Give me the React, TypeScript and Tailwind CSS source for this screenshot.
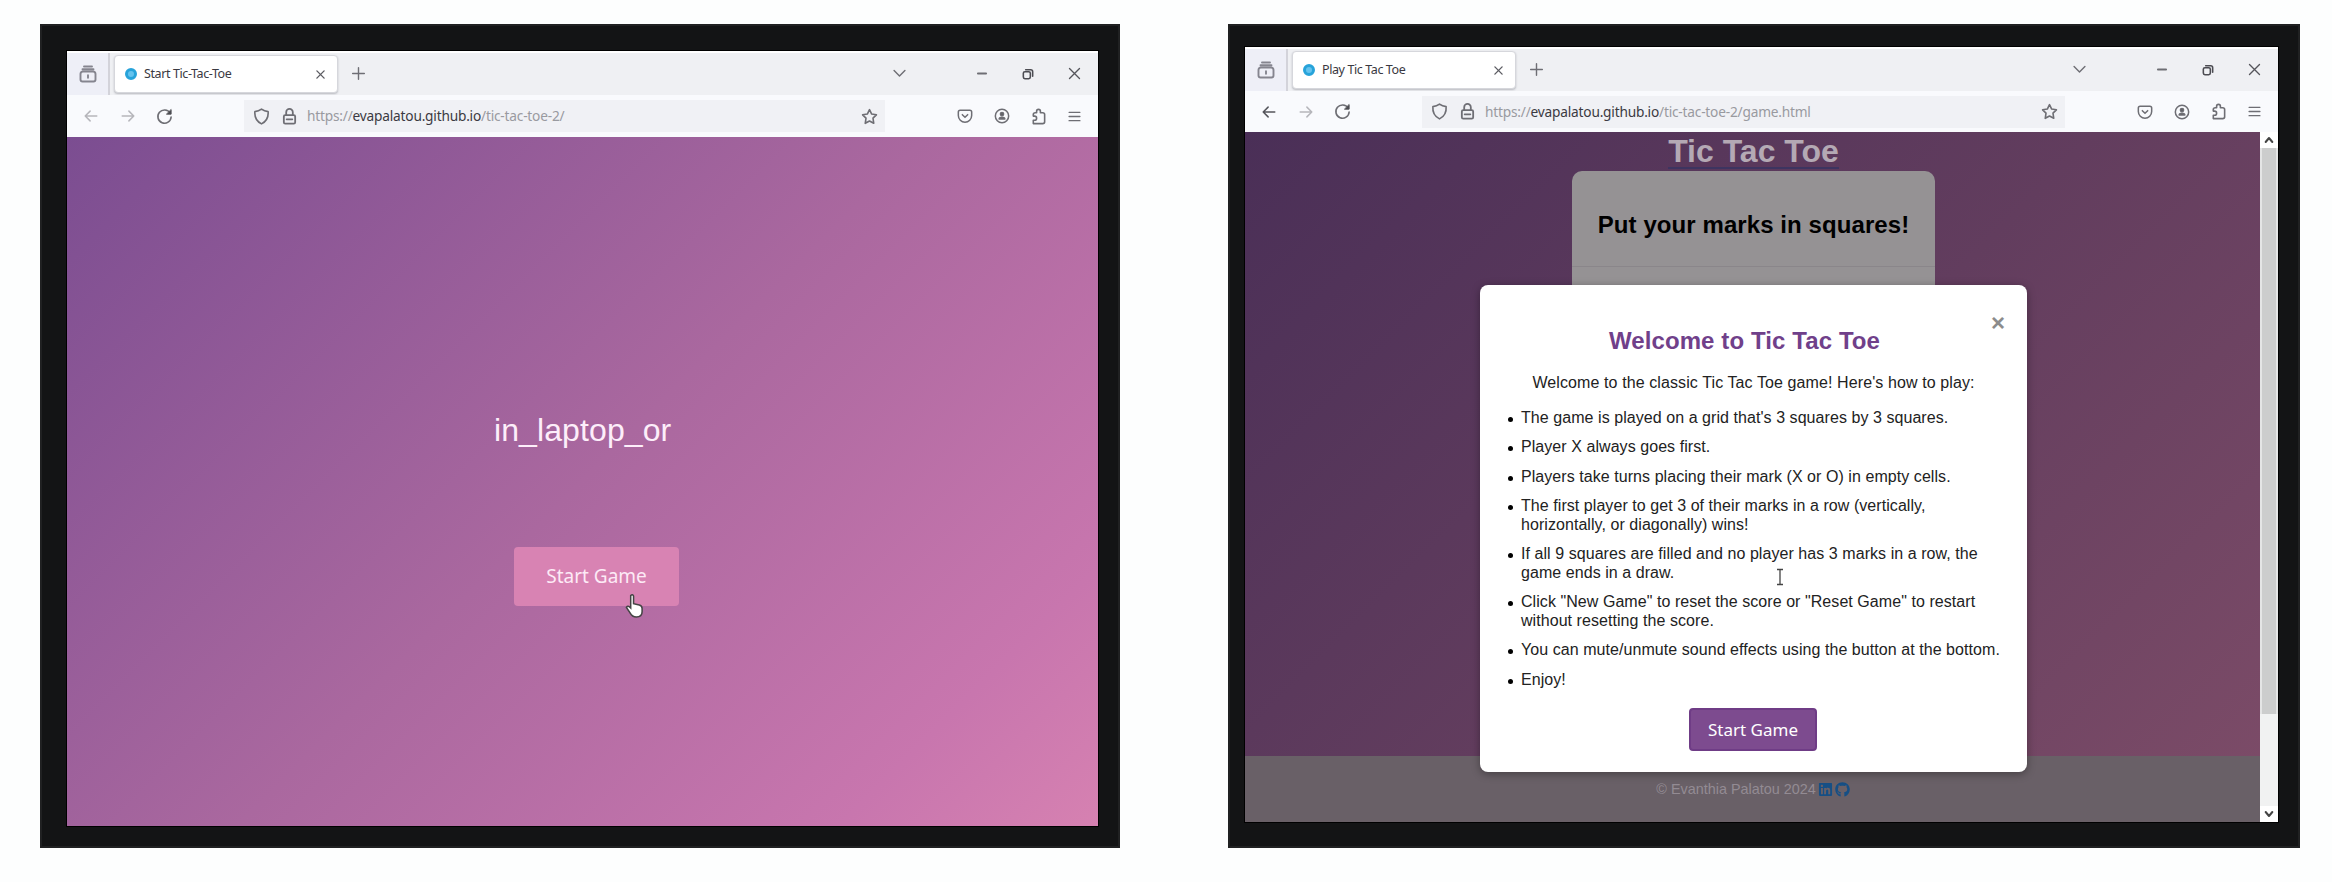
import { ReactNode } from "react";
import { FaGithub, FaLinkedin } from "react-icons/fa";

function Slot({ w, children }: { w: string; children?: ReactNode }) {
  return <div className={`flex shrink-0 items-center justify-center ${w}`}>{children}</div>;
}

type IconProps = { children: ReactNode; size?: number; color?: string; sw?: number };
function Icon({ children, size = 17, color = "#6e6e74", sw = 1.7 }: IconProps) {
  return (
    <svg width={size} height={size} viewBox="0 0 18 18" fill="none" stroke={color} strokeWidth={sw} strokeLinecap="round" strokeLinejoin="round">
      {children}
    </svg>
  );
}

function TabBar({ title, cls, tabW }: { title: string; cls: string; tabW: string }) {
  return (
    <div className={`flex shrink-0 items-stretch bg-[#eff0f3] pb-px pr-px ${cls}`}>
      <div className="-mb-px flex w-[43px] items-center justify-center border-r-2 border-[#d3d3da] bg-[#eeeff7]">
        <Icon size={18} color="#85858f" sw={1.9}>
          <path d="M5 1.500h8M3.500 4.300h11M3.500 6.500h11q2 .5 2 2.500v5.500q0 2-2 2h-11q-2 0-2-2V9q0-2 2-2.500zM9 10.300v2.400" />
        </Icon>
      </div>
      <div className={`mb-px ml-[4px] mt-[2px] flex items-center rounded-[4px] border border-[#d6d7dc] bg-white shadow-[0_1px_2px_#b9bac0] ${tabW}`}>
        <span className="ml-[10px] size-[12px] rounded-full border-[3px] border-[#27a3da] bg-[#64c3ee]" />
        <span className="ml-[7px] grow whitespace-nowrap font-['Noto_Sans',sans-serif] text-[12.5px] tracking-[-0.4px] text-[#3a3941]">{title}</span>
        <Slot w="w-[34px]">
          <Icon size={13} sw={1.9} color="#5c5c62"><path d="m4 4 10 10M14 4 4 14" /></Icon>
        </Slot>
      </div>
      <Slot w="w-[40px]">
        <Icon size={15} sw={1.7}><path d="M9 2v14M2 9h14" /></Icon>
      </Slot>
      <div className="grow" />
      <Slot w="w-[34px]">
        <Icon size={15}><path d="m2.500 5.500 6.500 6.500L15.500 5.500" /></Icon>
      </Slot>
      <div className="w-[43px]" />
      <Slot w="w-[46px]">
        <Icon size={16} sw={2.400}><path d="M4.500 8.500h9" /></Icon>
      </Slot>
      <Slot w="w-[46px]">
        <Icon size={14} sw={2} color="#4c4c52"><rect x="3" y="6" width="9" height="9" rx="2" /><path d="M6 3.500h6.500q2.500 0 2.500 2.500v6" /></Icon>
      </Slot>
      <Slot w="w-[46px]">
        <Icon size={15} sw={1.6} color="#55555b"><path d="m3 3 12 12M15 3 3 15" /></Icon>
      </Slot>
    </div>
  );
}

function NavBar({ path, backColor, cls }: { path: string; backColor: string; cls: string }) {
  return (
    <div className={`flex shrink-0 items-center bg-[#f9fafd] pl-[6px] pr-[6px] ${cls}`}>
      <Slot w="w-[36px]">
        <Icon size={16} color={backColor}><path d="M15.500 9H2.500M8 3.500 2.500 9 8 14.500" /></Icon>
      </Slot>
      <Slot w="w-[37px]">
        <Icon size={16} color="#b6b6bb"><path d="M2.500 9h13M10 3.500 15.500 9 10 14.500" /></Icon>
      </Slot>
      <Slot w="w-[36px]">
        <Icon><path d="M15 5.500A7 7 0 1 0 16 9.500" /><path d="M16 2v4.500h-4.500z" fill="#4c4c52" stroke="#4c4c52" strokeWidth="1" /></Icon>
      </Slot>
      <div className="ml-[62px] mr-[62px] flex h-[32px] grow items-center bg-[#f0f1f5] pl-[3px]">
        <Slot w="w-[28px]">
          <Icon><path d="M9 1.200q-3 2.300-7 2.600-.8 9 7 13 7.800-4 7-13-4-.3-7-2.600z" /></Icon>
        </Slot>
        <Slot w="w-[28px]">
          <Icon sw={1.9}><rect x="3" y="7.500" width="12" height="9" rx="1.500" /><path d="M5.500 7.500V4.500a3.500 3.500 0 0 1 7 0v3M6 12h6" /></Icon>
        </Slot>
        <span className="ml-[4px] grow whitespace-nowrap pt-px font-['Noto_Sans',sans-serif] text-[13.7px] tracking-[-0.2px] text-[#999aa0]">
          https://<span className="text-[#3b3a42]">evapalatou.github.io</span>{path}
        </span>
        <Slot w="w-[32px]">
          <Icon><path d="m9 1.800 2.300 4.600 5 .8-3.600 3.500.8 5.500L9 13.800l-4.500 2.400.8-5.500L1.700 7.200l5-.8z" /></Icon>
        </Slot>
      </div>
      <Slot w="w-[36px]">
        <Icon size={16}><path d="M3.500 2.500h11q2 0 2 2V8.500a7.500 7.500 0 0 1-15 0V4.500q0-2 2-2zM6 7.500l3 3 3-3" /></Icon>
      </Slot>
      <Slot w="w-[37px]">
        <Icon size={16}><circle cx="9" cy="9" r="7.500" /><circle cx="9" cy="6.800" r="1.800" fill="#5a5a60" /><path d="M5.800 12.500q0-2 3.200-2t3.200 2z" fill="#5a5a60" /></Icon>
      </Slot>
      <Slot w="w-[36px]">
        <Icon><path d="M7 5V3.500a2 2 0 0 1 4 0V5h2.500q2 0 2 2v7.500q0 2-2 2h-10v-3.500h1.300a2.200 2.200 0 0 0 0-4.400H3.500V7q0-2 2-2z" /></Icon>
      </Slot>
      <Slot w="w-[36px]">
        <Icon sw={1.600} size={15}><path d="M2.500 4h13M2.500 9h13M2.500 14h13" /></Icon>
      </Slot>
    </div>
  );
}

const rules = [
  ["The game is played on a grid that's 3 squares by 3 squares."],
  ["Player X always goes first."],
  ["Players take turns placing their mark (X or O) in empty cells."],
  ["The first player to get 3 of their marks in a row (vertically,", "horizontally, or diagonally) wins!"],
  ["If all 9 squares are filled and no player has 3 marks in a row, the", "game ends in a draw."],
  ['Click "New Game" to reset the score or "Reset Game" to restart', "without resetting the score."],
  ["You can mute/unmute sound effects using the button at the bottom."],
  ["Enjoy!"],
];

function StartScreen() {
  return (
    <div className="relative flex grow flex-col items-start bg-[linear-gradient(135deg,#7b4d91_0%,#aa689f_50%,#c876ae_85%,#d681b1_100%)]">
      <h1 className="ml-[427px] mt-[273px] whitespace-nowrap text-[32px] leading-[40px] tracking-[0.1px] text-[#fdeefa]">in_laptop_or</h1>
      <button className="ml-[447px] mt-[97px] h-[59px] w-[165px] rounded-[4px] bg-[#d883b3] font-['Noto_Sans',sans-serif] text-[19px] text-[#fdeaf6]">
        Start Game
      </button>
      <svg className="absolute left-[558px] top-[456px]" width="19" height="26" viewBox="0 0 20 27">
        <path d="M6 2.500q2-2 3 .5V11l6 1.500q3 .8 3 3.500v3.500q0 5.500-6 5.500-4.500 0-6.500-4L1.500 15q1.500-2.500 4.500.5z" fill="#fff" stroke="#444" strokeWidth="1.600" />
      </svg>
    </div>
  );
}

function GameScreen() {
  return (
    <div className="flex grow">
      <div className="relative flex w-[1015px] flex-col bg-[linear-gradient(135deg,#4a2f57_0%,#623d5e_50%,#7d4c68_100%)]">
        <h1 className="ml-[2px] flex h-[39px] items-start justify-center whitespace-nowrap pt-[4px] text-[32px] font-bold leading-[34px] text-[#b4a9b4]">
          <span className="border-b-2 border-[#3d3460] leading-[31px]">Tic Tac Toe</span>
        </h1>
        <div className="ml-[327px] w-[363px] grow rounded-t-[10px] bg-[#959294]">
          <h2 className="flex h-[96px] items-center justify-center whitespace-nowrap border-b border-[#8a868a] pt-[13px] text-[24px] font-bold tracking-[0.08px] text-black">
            Put your marks in squares!
          </h2>
        </div>
        <footer className="flex h-[66px] items-center justify-center gap-[2px] bg-[#696067] pl-[1px] pt-px text-[14.400px] text-[#938b93]">
          <span className="whitespace-nowrap">© Evanthia Palatou 2024</span>
          <FaLinkedin size={15} color="#164f85" />
          <FaGithub size={15} color="#164f85" />
        </footer>
        <div className="absolute left-[235px] top-[153px] flex h-[487px] w-[547px] flex-col rounded-[8px] bg-white shadow-[0_2px_8px_rgba(0,0,0,0.35)]">
          <span className="absolute right-[22px] top-[25px] text-[24px] font-bold leading-[26px] text-[#8c8c8c]">×</span>
          <h2 className="mr-[18px] mt-[42px] whitespace-nowrap text-center text-[24px] font-bold leading-[28px] tracking-[0.1px] text-[#70408a]">Welcome to Tic Tac Toe</h2>
          <p className="mt-[18px] whitespace-nowrap text-center text-[16px] leading-[20px] tracking-[0.1px] text-[#222]">
            Welcome to the classic Tic Tac Toe game! Here's how to play:
          </p>
          <ul className="mt-[16px] flex flex-col gap-[10.700px] pl-[28px]">
            {rules.map((lines) => (
              <li key={lines[0]} className="flex gap-[7px]">
                <span className="mr-px mt-[8px] size-[5px] shrink-0 rounded-full bg-black" />
                <span className="text-[16px] leading-[18.700px] tracking-[0.06px] text-[#222]">
                  {lines.map((l) => <span key={l} className="block whitespace-nowrap">{l}</span>)}
                </span>
              </li>
            ))}
          </ul>
          <button className="absolute left-[209px] top-[423px] h-[43px] w-[128px] rounded-[4px] border-2 border-[#6f3c86] bg-[#7d4b8f] font-['Noto_Sans',sans-serif] text-[17px] text-white">
            Start Game
          </button>
        </div>
        <svg className="absolute left-[530px] top-[436px]" width="10" height="18" viewBox="0 0 10 18" fill="none" stroke="#444" strokeWidth="1.300">
          <path d="M2 1.500h6M5 1.500v15M2 16.500h6" />
        </svg>
      </div>
      <div className="flex w-[18px] flex-col items-center bg-[#f1f2f2]">
        <div className="flex h-[16px] w-full items-center justify-center bg-white"><Icon size={12} sw={3} color="#444"><path d="m4 12 5-6 5 6" /></Icon></div>
        <div className="h-[566px] w-full border-x-2 border-[#e4e5e5] bg-[#cccdcd]" />
        <div className="grow" />
        <div className="flex h-[16px] w-full items-center justify-center bg-white"><Icon size={12} sw={3} color="#444"><path d="m4 6 5 6 5-6" /></Icon></div>
      </div>
    </div>
  );
}

export default function App() {
  return (
    <div className="flex h-[882px] w-[2332px] items-start gap-[108px] bg-[#fdfefe] pl-[40px] pt-[24px] font-['Liberation_Sans',Arial,sans-serif]">
      <section className="flex h-[824px] w-[1080px] border-2 border-[#202122] bg-[#131415] pb-[20px] pl-[25px] pr-[20px] pt-[25px]">
        <div className="flex grow flex-col border-t-2 border-white outline-1 outline-black">
          <TabBar title="Start Tic-Tac-Toe" cls="h-[42px]" tabW="w-[224px]" />
          <NavBar path="/tic-tac-toe-2/" backColor="#b6b6bb" cls="h-[42px]" />
          <StartScreen />
        </div>
      </section>
      <section className="flex h-[824px] w-[1072px] border-2 border-[#202122] bg-[#131415] pb-[24px] pl-[15px] pr-[20px] pt-[21px]">
        <div className="flex grow flex-col border-t-2 border-white outline-1 outline-black">
          <TabBar title="Play Tic Tac Toe" cls="h-[42px]" tabW="w-[224px]" />
          <NavBar path="/tic-tac-toe-2/game.html" backColor="#55555b" cls="h-[41px]" />
          <GameScreen />
        </div>
      </section>
    </div>
  );
}
